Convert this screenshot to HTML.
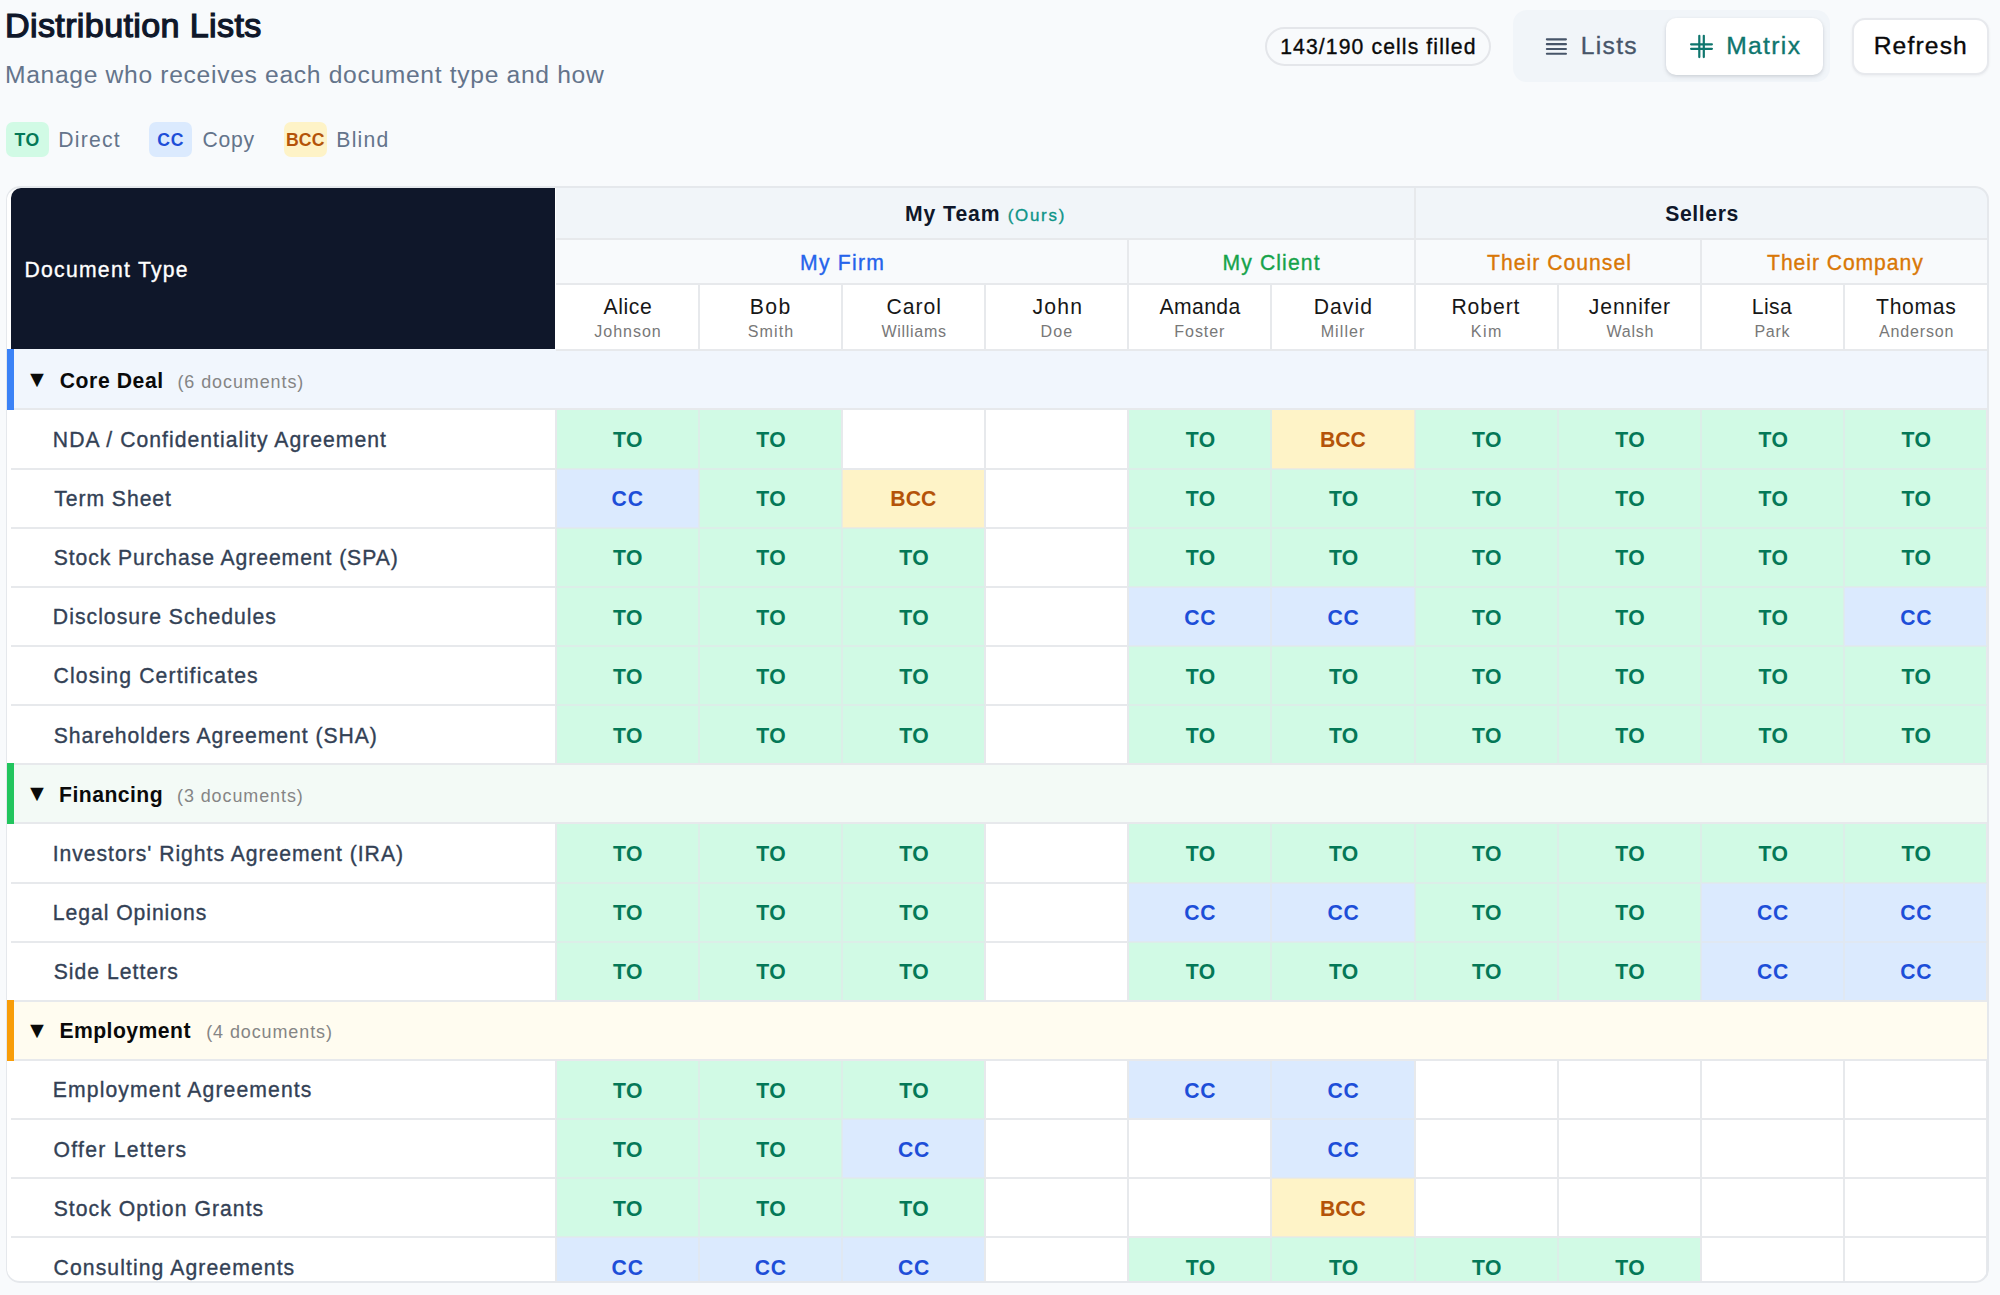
<!DOCTYPE html>
<html lang="en"><head><meta charset="utf-8"><title>Distribution Lists</title>
<style>
html,body{margin:0;padding:0;}
body{width:2000px;height:1295px;overflow:hidden;background:#f8fafc;position:relative;font-family:"Liberation Sans", sans-serif;}
.b{position:absolute;}
.t{position:absolute;white-space:nowrap;}
</style></head><body>
<div class="b" style="left:6px;top:122px;width:42.5px;height:35px;background:#d1fae5;border-radius:7px;"></div>
<div class="b" style="left:149px;top:122px;width:42.5px;height:35px;background:#dbeafe;border-radius:7px;"></div>
<div class="b" style="left:284px;top:122px;width:42.5px;height:35px;background:#fef3c7;border-radius:7px;"></div>
<div class="b" style="left:1265px;top:27px;width:226px;height:39px;border-radius:20px;border:2px solid #e4e6ea;box-sizing:border-box;background:#f8fafc;"></div>
<div class="b" style="left:1513px;top:10px;width:317px;height:72px;border-radius:14px;background:#f1f5f9;"></div>
<div class="b" style="left:1666px;top:18px;width:157px;height:57px;border-radius:10px;background:#fff;box-shadow:0 2px 5px rgba(15,23,42,0.10),0 1px 3px rgba(15,23,42,0.08);"></div>
<svg style="position:absolute;left:1545px;top:36px" width="23" height="22" viewBox="0 0 23 22"><g stroke="#475569" stroke-width="2.2" stroke-linecap="round"><line x1="1.9" y1="3.3" x2="20.9" y2="3.3"/><line x1="1.9" y1="8.2" x2="20.9" y2="8.2"/><line x1="1.9" y1="13" x2="20.9" y2="13"/><line x1="1.9" y1="17.75" x2="20.9" y2="17.75"/></g></svg>
<svg style="position:absolute;left:1688px;top:34px" width="26" height="26" viewBox="0 0 26 26"><g stroke="#0f766e" stroke-width="2.2" stroke-linecap="round"><line x1="11.3" y1="1.8" x2="11.3" y2="23.1"/><line x1="15.8" y1="1.8" x2="15.8" y2="23.1"/><line x1="3.1" y1="10.3" x2="23.9" y2="10.3"/><line x1="3.1" y1="14.8" x2="23.9" y2="14.8"/></g></svg>
<div class="b" style="left:1852px;top:18px;width:136.5px;height:56.5px;border-radius:13px;background:#fff;border:2px solid #e7e9ed;box-sizing:border-box;box-shadow:0 1px 3px rgba(15,23,42,0.06);"></div>
<div class="t" id="h1" style="left:4.96px;top:-8.83px;line-height:68px;font-size:34.14px;color:#0f172a;letter-spacing:0.356px;-webkit-text-stroke:1.25px #0f172a;">Distribution Lists</div>
<div class="t" id="sub" style="left:5.00px;top:50.45px;line-height:50px;font-size:24.66px;color:#64748b;letter-spacing:0.666px;">Manage who receives each document type and how</div>
<div class="t" id="lb0" style="left:14.50px;top:121.88px;line-height:36px;font-size:17.66px;color:#047857;font-weight:700;letter-spacing:0.432px;">TO</div>
<div class="t" id="ll0" style="left:58.30px;top:119.26px;line-height:42px;font-size:21.16px;color:#64748b;letter-spacing:1.224px;">Direct</div>
<div class="t" id="lb1" style="left:157.30px;top:121.88px;line-height:36px;font-size:17.66px;color:#1d4ed8;font-weight:700;letter-spacing:0.647px;">CC</div>
<div class="t" id="ll1" style="left:202.60px;top:119.26px;line-height:42px;font-size:21.16px;color:#64748b;letter-spacing:0.660px;">Copy</div>
<div class="t" id="lb2" style="left:285.90px;top:121.88px;line-height:36px;font-size:17.66px;color:#b45309;font-weight:700;letter-spacing:0.147px;">BCC</div>
<div class="t" id="ll2" style="left:336.30px;top:119.26px;line-height:42px;font-size:21.16px;color:#64748b;letter-spacing:1.229px;">Blind</div>
<div class="t" id="pill" style="left:1280.17px;top:25.66px;line-height:42px;font-size:21.16px;color:#0a0a0a;letter-spacing:1.117px;-webkit-text-stroke:0.35px #0a0a0a;">143/190 cells filled</div>
<div class="t" id="lists" style="left:1580.67px;top:21.45px;line-height:50px;font-size:24.66px;color:#475569;letter-spacing:1.318px;-webkit-text-stroke:0.35px #475569;">Lists</div>
<div class="t" id="matrix" style="left:1726.17px;top:21.45px;line-height:50px;font-size:24.66px;color:#0f766e;letter-spacing:1.350px;-webkit-text-stroke:0.35px #0f766e;">Matrix</div>
<div class="t" id="refresh" style="left:1873.67px;top:21.45px;line-height:50px;font-size:24.66px;color:#0a0a0a;letter-spacing:1.136px;-webkit-text-stroke:0.35px #0a0a0a;">Refresh</div>
<div class="b" style="left:6px;top:186px;width:1983px;height:1097px;border-radius:14px;overflow:hidden;background:#fff;"><div class="b" style="left:-6px;top:-186px;width:2000px;height:1295px;">
<div class="b" style="left:11px;top:188px;width:544px;height:161px;background:#0f172a;border-top-left-radius:10px;"></div>
<div class="b" style="left:556px;top:188px;width:1434px;height:51px;background:#f1f5f9;"></div>
<div class="b" style="left:556px;top:239px;width:1434px;height:45px;background:#f8fafc;"></div>
<div class="b" style="left:556px;top:284px;width:1434px;height:66px;background:#ffffff;"></div>
<div class="b" style="left:11px;top:349px;width:1979px;height:60px;background:#f1f6fd;"></div>
<div class="b" style="left:556px;top:409px;width:143px;height:60px;background:#d1fae5;"></div>
<div class="b" style="left:699px;top:409px;width:143px;height:60px;background:#d1fae5;"></div>
<div class="b" style="left:1128px;top:409px;width:144px;height:60px;background:#d1fae5;"></div>
<div class="b" style="left:1272px;top:409px;width:143px;height:60px;background:#fef3c7;"></div>
<div class="b" style="left:1415px;top:409px;width:143px;height:60px;background:#d1fae5;"></div>
<div class="b" style="left:1558px;top:409px;width:143px;height:60px;background:#d1fae5;"></div>
<div class="b" style="left:1701px;top:409px;width:143px;height:60px;background:#d1fae5;"></div>
<div class="b" style="left:1844px;top:409px;width:143px;height:60px;background:#d1fae5;"></div>
<div class="b" style="left:556px;top:469px;width:143px;height:59px;background:#dbeafe;"></div>
<div class="b" style="left:699px;top:469px;width:143px;height:59px;background:#d1fae5;"></div>
<div class="b" style="left:842px;top:469px;width:143px;height:59px;background:#fef3c7;"></div>
<div class="b" style="left:1128px;top:469px;width:144px;height:59px;background:#d1fae5;"></div>
<div class="b" style="left:1272px;top:469px;width:143px;height:59px;background:#d1fae5;"></div>
<div class="b" style="left:1415px;top:469px;width:143px;height:59px;background:#d1fae5;"></div>
<div class="b" style="left:1558px;top:469px;width:143px;height:59px;background:#d1fae5;"></div>
<div class="b" style="left:1701px;top:469px;width:143px;height:59px;background:#d1fae5;"></div>
<div class="b" style="left:1844px;top:469px;width:143px;height:59px;background:#d1fae5;"></div>
<div class="b" style="left:556px;top:528px;width:143px;height:59px;background:#d1fae5;"></div>
<div class="b" style="left:699px;top:528px;width:143px;height:59px;background:#d1fae5;"></div>
<div class="b" style="left:842px;top:528px;width:143px;height:59px;background:#d1fae5;"></div>
<div class="b" style="left:1128px;top:528px;width:144px;height:59px;background:#d1fae5;"></div>
<div class="b" style="left:1272px;top:528px;width:143px;height:59px;background:#d1fae5;"></div>
<div class="b" style="left:1415px;top:528px;width:143px;height:59px;background:#d1fae5;"></div>
<div class="b" style="left:1558px;top:528px;width:143px;height:59px;background:#d1fae5;"></div>
<div class="b" style="left:1701px;top:528px;width:143px;height:59px;background:#d1fae5;"></div>
<div class="b" style="left:1844px;top:528px;width:143px;height:59px;background:#d1fae5;"></div>
<div class="b" style="left:556px;top:587px;width:143px;height:59px;background:#d1fae5;"></div>
<div class="b" style="left:699px;top:587px;width:143px;height:59px;background:#d1fae5;"></div>
<div class="b" style="left:842px;top:587px;width:143px;height:59px;background:#d1fae5;"></div>
<div class="b" style="left:1128px;top:587px;width:144px;height:59px;background:#dbeafe;"></div>
<div class="b" style="left:1272px;top:587px;width:143px;height:59px;background:#dbeafe;"></div>
<div class="b" style="left:1415px;top:587px;width:143px;height:59px;background:#d1fae5;"></div>
<div class="b" style="left:1558px;top:587px;width:143px;height:59px;background:#d1fae5;"></div>
<div class="b" style="left:1701px;top:587px;width:143px;height:59px;background:#d1fae5;"></div>
<div class="b" style="left:1844px;top:587px;width:143px;height:59px;background:#dbeafe;"></div>
<div class="b" style="left:556px;top:646px;width:143px;height:59px;background:#d1fae5;"></div>
<div class="b" style="left:699px;top:646px;width:143px;height:59px;background:#d1fae5;"></div>
<div class="b" style="left:842px;top:646px;width:143px;height:59px;background:#d1fae5;"></div>
<div class="b" style="left:1128px;top:646px;width:144px;height:59px;background:#d1fae5;"></div>
<div class="b" style="left:1272px;top:646px;width:143px;height:59px;background:#d1fae5;"></div>
<div class="b" style="left:1415px;top:646px;width:143px;height:59px;background:#d1fae5;"></div>
<div class="b" style="left:1558px;top:646px;width:143px;height:59px;background:#d1fae5;"></div>
<div class="b" style="left:1701px;top:646px;width:143px;height:59px;background:#d1fae5;"></div>
<div class="b" style="left:1844px;top:646px;width:143px;height:59px;background:#d1fae5;"></div>
<div class="b" style="left:556px;top:705px;width:143px;height:59px;background:#d1fae5;"></div>
<div class="b" style="left:699px;top:705px;width:143px;height:59px;background:#d1fae5;"></div>
<div class="b" style="left:842px;top:705px;width:143px;height:59px;background:#d1fae5;"></div>
<div class="b" style="left:1128px;top:705px;width:144px;height:59px;background:#d1fae5;"></div>
<div class="b" style="left:1272px;top:705px;width:143px;height:59px;background:#d1fae5;"></div>
<div class="b" style="left:1415px;top:705px;width:143px;height:59px;background:#d1fae5;"></div>
<div class="b" style="left:1558px;top:705px;width:143px;height:59px;background:#d1fae5;"></div>
<div class="b" style="left:1701px;top:705px;width:143px;height:59px;background:#d1fae5;"></div>
<div class="b" style="left:1844px;top:705px;width:143px;height:59px;background:#d1fae5;"></div>
<div class="b" style="left:11px;top:763px;width:1979px;height:60px;background:#f3faf6;"></div>
<div class="b" style="left:556px;top:823px;width:143px;height:60px;background:#d1fae5;"></div>
<div class="b" style="left:699px;top:823px;width:143px;height:60px;background:#d1fae5;"></div>
<div class="b" style="left:842px;top:823px;width:143px;height:60px;background:#d1fae5;"></div>
<div class="b" style="left:1128px;top:823px;width:144px;height:60px;background:#d1fae5;"></div>
<div class="b" style="left:1272px;top:823px;width:143px;height:60px;background:#d1fae5;"></div>
<div class="b" style="left:1415px;top:823px;width:143px;height:60px;background:#d1fae5;"></div>
<div class="b" style="left:1558px;top:823px;width:143px;height:60px;background:#d1fae5;"></div>
<div class="b" style="left:1701px;top:823px;width:143px;height:60px;background:#d1fae5;"></div>
<div class="b" style="left:1844px;top:823px;width:143px;height:60px;background:#d1fae5;"></div>
<div class="b" style="left:556px;top:883px;width:143px;height:59px;background:#d1fae5;"></div>
<div class="b" style="left:699px;top:883px;width:143px;height:59px;background:#d1fae5;"></div>
<div class="b" style="left:842px;top:883px;width:143px;height:59px;background:#d1fae5;"></div>
<div class="b" style="left:1128px;top:883px;width:144px;height:59px;background:#dbeafe;"></div>
<div class="b" style="left:1272px;top:883px;width:143px;height:59px;background:#dbeafe;"></div>
<div class="b" style="left:1415px;top:883px;width:143px;height:59px;background:#d1fae5;"></div>
<div class="b" style="left:1558px;top:883px;width:143px;height:59px;background:#d1fae5;"></div>
<div class="b" style="left:1701px;top:883px;width:143px;height:59px;background:#dbeafe;"></div>
<div class="b" style="left:1844px;top:883px;width:143px;height:59px;background:#dbeafe;"></div>
<div class="b" style="left:556px;top:942px;width:143px;height:59px;background:#d1fae5;"></div>
<div class="b" style="left:699px;top:942px;width:143px;height:59px;background:#d1fae5;"></div>
<div class="b" style="left:842px;top:942px;width:143px;height:59px;background:#d1fae5;"></div>
<div class="b" style="left:1128px;top:942px;width:144px;height:59px;background:#d1fae5;"></div>
<div class="b" style="left:1272px;top:942px;width:143px;height:59px;background:#d1fae5;"></div>
<div class="b" style="left:1415px;top:942px;width:143px;height:59px;background:#d1fae5;"></div>
<div class="b" style="left:1558px;top:942px;width:143px;height:59px;background:#d1fae5;"></div>
<div class="b" style="left:1701px;top:942px;width:143px;height:59px;background:#dbeafe;"></div>
<div class="b" style="left:1844px;top:942px;width:143px;height:59px;background:#dbeafe;"></div>
<div class="b" style="left:11px;top:1000px;width:1979px;height:60px;background:#fffcf0;"></div>
<div class="b" style="left:556px;top:1060px;width:143px;height:59px;background:#d1fae5;"></div>
<div class="b" style="left:699px;top:1060px;width:143px;height:59px;background:#d1fae5;"></div>
<div class="b" style="left:842px;top:1060px;width:143px;height:59px;background:#d1fae5;"></div>
<div class="b" style="left:1128px;top:1060px;width:144px;height:59px;background:#dbeafe;"></div>
<div class="b" style="left:1272px;top:1060px;width:143px;height:59px;background:#dbeafe;"></div>
<div class="b" style="left:556px;top:1119px;width:143px;height:59px;background:#d1fae5;"></div>
<div class="b" style="left:699px;top:1119px;width:143px;height:59px;background:#d1fae5;"></div>
<div class="b" style="left:842px;top:1119px;width:143px;height:59px;background:#dbeafe;"></div>
<div class="b" style="left:1272px;top:1119px;width:143px;height:59px;background:#dbeafe;"></div>
<div class="b" style="left:556px;top:1178px;width:143px;height:59px;background:#d1fae5;"></div>
<div class="b" style="left:699px;top:1178px;width:143px;height:59px;background:#d1fae5;"></div>
<div class="b" style="left:842px;top:1178px;width:143px;height:59px;background:#d1fae5;"></div>
<div class="b" style="left:1272px;top:1178px;width:143px;height:59px;background:#fef3c7;"></div>
<div class="b" style="left:556px;top:1237px;width:143px;height:60px;background:#dbeafe;"></div>
<div class="b" style="left:699px;top:1237px;width:143px;height:60px;background:#dbeafe;"></div>
<div class="b" style="left:842px;top:1237px;width:143px;height:60px;background:#dbeafe;"></div>
<div class="b" style="left:1128px;top:1237px;width:144px;height:60px;background:#d1fae5;"></div>
<div class="b" style="left:1272px;top:1237px;width:143px;height:60px;background:#d1fae5;"></div>
<div class="b" style="left:1415px;top:1237px;width:143px;height:60px;background:#d1fae5;"></div>
<div class="b" style="left:1558px;top:1237px;width:143px;height:60px;background:#d1fae5;"></div>
<div class="b" style="left:556px;top:238px;width:1434px;height:2px;background:#e7e9ec;"></div>
<div class="b" style="left:556px;top:283px;width:1434px;height:2px;background:#e7e9ec;"></div>
<div class="b" style="left:556px;top:349px;width:1434px;height:2px;background:#e7e9ec;"></div>
<div class="b" style="left:11px;top:408px;width:545px;height:2px;background:#e7e9ec;"></div>
<div class="b" style="left:556px;top:408px;width:143px;height:2px;background:#e7e9ec;"></div>
<div class="b" style="left:699px;top:408px;width:143px;height:2px;background:#e7e9ec;"></div>
<div class="b" style="left:842px;top:408px;width:143px;height:2px;background:#e7e9ec;"></div>
<div class="b" style="left:985px;top:408px;width:143px;height:2px;background:#e7e9ec;"></div>
<div class="b" style="left:1128px;top:408px;width:144px;height:2px;background:#e7e9ec;"></div>
<div class="b" style="left:1272px;top:408px;width:143px;height:2px;background:#e7e9ec;"></div>
<div class="b" style="left:1415px;top:408px;width:143px;height:2px;background:#e7e9ec;"></div>
<div class="b" style="left:1558px;top:408px;width:143px;height:2px;background:#e7e9ec;"></div>
<div class="b" style="left:1701px;top:408px;width:143px;height:2px;background:#e7e9ec;"></div>
<div class="b" style="left:1844px;top:408px;width:146px;height:2px;background:#e7e9ec;"></div>
<div class="b" style="left:11px;top:468px;width:545px;height:2px;background:#e7e9ec;"></div>
<div class="b" style="left:556px;top:468px;width:143px;height:2px;background:rgba(226,230,233,0.6);"></div>
<div class="b" style="left:699px;top:468px;width:143px;height:2px;background:rgba(226,230,233,0.6);"></div>
<div class="b" style="left:842px;top:468px;width:143px;height:2px;background:#e7e9ec;"></div>
<div class="b" style="left:985px;top:468px;width:143px;height:2px;background:#e7e9ec;"></div>
<div class="b" style="left:1128px;top:468px;width:144px;height:2px;background:rgba(226,230,233,0.6);"></div>
<div class="b" style="left:1272px;top:468px;width:143px;height:2px;background:rgba(226,230,233,0.6);"></div>
<div class="b" style="left:1415px;top:468px;width:143px;height:2px;background:rgba(226,230,233,0.6);"></div>
<div class="b" style="left:1558px;top:468px;width:143px;height:2px;background:rgba(226,230,233,0.6);"></div>
<div class="b" style="left:1701px;top:468px;width:143px;height:2px;background:rgba(226,230,233,0.6);"></div>
<div class="b" style="left:1844px;top:468px;width:146px;height:2px;background:rgba(226,230,233,0.6);"></div>
<div class="b" style="left:11px;top:527px;width:545px;height:2px;background:#e7e9ec;"></div>
<div class="b" style="left:556px;top:527px;width:143px;height:2px;background:rgba(226,230,233,0.6);"></div>
<div class="b" style="left:699px;top:527px;width:143px;height:2px;background:rgba(226,230,233,0.6);"></div>
<div class="b" style="left:842px;top:527px;width:143px;height:2px;background:rgba(226,230,233,0.6);"></div>
<div class="b" style="left:985px;top:527px;width:143px;height:2px;background:#e7e9ec;"></div>
<div class="b" style="left:1128px;top:527px;width:144px;height:2px;background:rgba(226,230,233,0.6);"></div>
<div class="b" style="left:1272px;top:527px;width:143px;height:2px;background:rgba(226,230,233,0.6);"></div>
<div class="b" style="left:1415px;top:527px;width:143px;height:2px;background:rgba(226,230,233,0.6);"></div>
<div class="b" style="left:1558px;top:527px;width:143px;height:2px;background:rgba(226,230,233,0.6);"></div>
<div class="b" style="left:1701px;top:527px;width:143px;height:2px;background:rgba(226,230,233,0.6);"></div>
<div class="b" style="left:1844px;top:527px;width:146px;height:2px;background:rgba(226,230,233,0.6);"></div>
<div class="b" style="left:11px;top:586px;width:545px;height:2px;background:#e7e9ec;"></div>
<div class="b" style="left:556px;top:586px;width:143px;height:2px;background:rgba(226,230,233,0.6);"></div>
<div class="b" style="left:699px;top:586px;width:143px;height:2px;background:rgba(226,230,233,0.6);"></div>
<div class="b" style="left:842px;top:586px;width:143px;height:2px;background:rgba(226,230,233,0.6);"></div>
<div class="b" style="left:985px;top:586px;width:143px;height:2px;background:#e7e9ec;"></div>
<div class="b" style="left:1128px;top:586px;width:144px;height:2px;background:rgba(226,230,233,0.6);"></div>
<div class="b" style="left:1272px;top:586px;width:143px;height:2px;background:rgba(226,230,233,0.6);"></div>
<div class="b" style="left:1415px;top:586px;width:143px;height:2px;background:rgba(226,230,233,0.6);"></div>
<div class="b" style="left:1558px;top:586px;width:143px;height:2px;background:rgba(226,230,233,0.6);"></div>
<div class="b" style="left:1701px;top:586px;width:143px;height:2px;background:rgba(226,230,233,0.6);"></div>
<div class="b" style="left:1844px;top:586px;width:146px;height:2px;background:rgba(226,230,233,0.6);"></div>
<div class="b" style="left:11px;top:645px;width:545px;height:2px;background:#e7e9ec;"></div>
<div class="b" style="left:556px;top:645px;width:143px;height:2px;background:rgba(226,230,233,0.6);"></div>
<div class="b" style="left:699px;top:645px;width:143px;height:2px;background:rgba(226,230,233,0.6);"></div>
<div class="b" style="left:842px;top:645px;width:143px;height:2px;background:rgba(226,230,233,0.6);"></div>
<div class="b" style="left:985px;top:645px;width:143px;height:2px;background:#e7e9ec;"></div>
<div class="b" style="left:1128px;top:645px;width:144px;height:2px;background:rgba(226,230,233,0.6);"></div>
<div class="b" style="left:1272px;top:645px;width:143px;height:2px;background:rgba(226,230,233,0.6);"></div>
<div class="b" style="left:1415px;top:645px;width:143px;height:2px;background:rgba(226,230,233,0.6);"></div>
<div class="b" style="left:1558px;top:645px;width:143px;height:2px;background:rgba(226,230,233,0.6);"></div>
<div class="b" style="left:1701px;top:645px;width:143px;height:2px;background:rgba(226,230,233,0.6);"></div>
<div class="b" style="left:1844px;top:645px;width:146px;height:2px;background:rgba(226,230,233,0.6);"></div>
<div class="b" style="left:11px;top:704px;width:545px;height:2px;background:#e7e9ec;"></div>
<div class="b" style="left:556px;top:704px;width:143px;height:2px;background:rgba(226,230,233,0.6);"></div>
<div class="b" style="left:699px;top:704px;width:143px;height:2px;background:rgba(226,230,233,0.6);"></div>
<div class="b" style="left:842px;top:704px;width:143px;height:2px;background:rgba(226,230,233,0.6);"></div>
<div class="b" style="left:985px;top:704px;width:143px;height:2px;background:#e7e9ec;"></div>
<div class="b" style="left:1128px;top:704px;width:144px;height:2px;background:rgba(226,230,233,0.6);"></div>
<div class="b" style="left:1272px;top:704px;width:143px;height:2px;background:rgba(226,230,233,0.6);"></div>
<div class="b" style="left:1415px;top:704px;width:143px;height:2px;background:rgba(226,230,233,0.6);"></div>
<div class="b" style="left:1558px;top:704px;width:143px;height:2px;background:rgba(226,230,233,0.6);"></div>
<div class="b" style="left:1701px;top:704px;width:143px;height:2px;background:rgba(226,230,233,0.6);"></div>
<div class="b" style="left:1844px;top:704px;width:146px;height:2px;background:rgba(226,230,233,0.6);"></div>
<div class="b" style="left:11px;top:763px;width:545px;height:2px;background:#e7e9ec;"></div>
<div class="b" style="left:556px;top:763px;width:143px;height:2px;background:#e7e9ec;"></div>
<div class="b" style="left:699px;top:763px;width:143px;height:2px;background:#e7e9ec;"></div>
<div class="b" style="left:842px;top:763px;width:143px;height:2px;background:#e7e9ec;"></div>
<div class="b" style="left:985px;top:763px;width:143px;height:2px;background:#e7e9ec;"></div>
<div class="b" style="left:1128px;top:763px;width:144px;height:2px;background:#e7e9ec;"></div>
<div class="b" style="left:1272px;top:763px;width:143px;height:2px;background:#e7e9ec;"></div>
<div class="b" style="left:1415px;top:763px;width:143px;height:2px;background:#e7e9ec;"></div>
<div class="b" style="left:1558px;top:763px;width:143px;height:2px;background:#e7e9ec;"></div>
<div class="b" style="left:1701px;top:763px;width:143px;height:2px;background:#e7e9ec;"></div>
<div class="b" style="left:1844px;top:763px;width:146px;height:2px;background:#e7e9ec;"></div>
<div class="b" style="left:11px;top:822px;width:545px;height:2px;background:#e7e9ec;"></div>
<div class="b" style="left:556px;top:822px;width:143px;height:2px;background:#e7e9ec;"></div>
<div class="b" style="left:699px;top:822px;width:143px;height:2px;background:#e7e9ec;"></div>
<div class="b" style="left:842px;top:822px;width:143px;height:2px;background:#e7e9ec;"></div>
<div class="b" style="left:985px;top:822px;width:143px;height:2px;background:#e7e9ec;"></div>
<div class="b" style="left:1128px;top:822px;width:144px;height:2px;background:#e7e9ec;"></div>
<div class="b" style="left:1272px;top:822px;width:143px;height:2px;background:#e7e9ec;"></div>
<div class="b" style="left:1415px;top:822px;width:143px;height:2px;background:#e7e9ec;"></div>
<div class="b" style="left:1558px;top:822px;width:143px;height:2px;background:#e7e9ec;"></div>
<div class="b" style="left:1701px;top:822px;width:143px;height:2px;background:#e7e9ec;"></div>
<div class="b" style="left:1844px;top:822px;width:146px;height:2px;background:#e7e9ec;"></div>
<div class="b" style="left:11px;top:882px;width:545px;height:2px;background:#e7e9ec;"></div>
<div class="b" style="left:556px;top:882px;width:143px;height:2px;background:rgba(226,230,233,0.6);"></div>
<div class="b" style="left:699px;top:882px;width:143px;height:2px;background:rgba(226,230,233,0.6);"></div>
<div class="b" style="left:842px;top:882px;width:143px;height:2px;background:rgba(226,230,233,0.6);"></div>
<div class="b" style="left:985px;top:882px;width:143px;height:2px;background:#e7e9ec;"></div>
<div class="b" style="left:1128px;top:882px;width:144px;height:2px;background:rgba(226,230,233,0.6);"></div>
<div class="b" style="left:1272px;top:882px;width:143px;height:2px;background:rgba(226,230,233,0.6);"></div>
<div class="b" style="left:1415px;top:882px;width:143px;height:2px;background:rgba(226,230,233,0.6);"></div>
<div class="b" style="left:1558px;top:882px;width:143px;height:2px;background:rgba(226,230,233,0.6);"></div>
<div class="b" style="left:1701px;top:882px;width:143px;height:2px;background:rgba(226,230,233,0.6);"></div>
<div class="b" style="left:1844px;top:882px;width:146px;height:2px;background:rgba(226,230,233,0.6);"></div>
<div class="b" style="left:11px;top:941px;width:545px;height:2px;background:#e7e9ec;"></div>
<div class="b" style="left:556px;top:941px;width:143px;height:2px;background:rgba(226,230,233,0.6);"></div>
<div class="b" style="left:699px;top:941px;width:143px;height:2px;background:rgba(226,230,233,0.6);"></div>
<div class="b" style="left:842px;top:941px;width:143px;height:2px;background:rgba(226,230,233,0.6);"></div>
<div class="b" style="left:985px;top:941px;width:143px;height:2px;background:#e7e9ec;"></div>
<div class="b" style="left:1128px;top:941px;width:144px;height:2px;background:rgba(226,230,233,0.6);"></div>
<div class="b" style="left:1272px;top:941px;width:143px;height:2px;background:rgba(226,230,233,0.6);"></div>
<div class="b" style="left:1415px;top:941px;width:143px;height:2px;background:rgba(226,230,233,0.6);"></div>
<div class="b" style="left:1558px;top:941px;width:143px;height:2px;background:rgba(226,230,233,0.6);"></div>
<div class="b" style="left:1701px;top:941px;width:143px;height:2px;background:rgba(226,230,233,0.6);"></div>
<div class="b" style="left:1844px;top:941px;width:146px;height:2px;background:rgba(226,230,233,0.6);"></div>
<div class="b" style="left:11px;top:1000px;width:545px;height:2px;background:#e7e9ec;"></div>
<div class="b" style="left:556px;top:1000px;width:143px;height:2px;background:#e7e9ec;"></div>
<div class="b" style="left:699px;top:1000px;width:143px;height:2px;background:#e7e9ec;"></div>
<div class="b" style="left:842px;top:1000px;width:143px;height:2px;background:#e7e9ec;"></div>
<div class="b" style="left:985px;top:1000px;width:143px;height:2px;background:#e7e9ec;"></div>
<div class="b" style="left:1128px;top:1000px;width:144px;height:2px;background:#e7e9ec;"></div>
<div class="b" style="left:1272px;top:1000px;width:143px;height:2px;background:#e7e9ec;"></div>
<div class="b" style="left:1415px;top:1000px;width:143px;height:2px;background:#e7e9ec;"></div>
<div class="b" style="left:1558px;top:1000px;width:143px;height:2px;background:#e7e9ec;"></div>
<div class="b" style="left:1701px;top:1000px;width:143px;height:2px;background:#e7e9ec;"></div>
<div class="b" style="left:1844px;top:1000px;width:146px;height:2px;background:#e7e9ec;"></div>
<div class="b" style="left:11px;top:1059px;width:545px;height:2px;background:#e7e9ec;"></div>
<div class="b" style="left:556px;top:1059px;width:143px;height:2px;background:#e7e9ec;"></div>
<div class="b" style="left:699px;top:1059px;width:143px;height:2px;background:#e7e9ec;"></div>
<div class="b" style="left:842px;top:1059px;width:143px;height:2px;background:#e7e9ec;"></div>
<div class="b" style="left:985px;top:1059px;width:143px;height:2px;background:#e7e9ec;"></div>
<div class="b" style="left:1128px;top:1059px;width:144px;height:2px;background:#e7e9ec;"></div>
<div class="b" style="left:1272px;top:1059px;width:143px;height:2px;background:#e7e9ec;"></div>
<div class="b" style="left:1415px;top:1059px;width:143px;height:2px;background:#e7e9ec;"></div>
<div class="b" style="left:1558px;top:1059px;width:143px;height:2px;background:#e7e9ec;"></div>
<div class="b" style="left:1701px;top:1059px;width:143px;height:2px;background:#e7e9ec;"></div>
<div class="b" style="left:1844px;top:1059px;width:146px;height:2px;background:#e7e9ec;"></div>
<div class="b" style="left:11px;top:1118px;width:545px;height:2px;background:#e7e9ec;"></div>
<div class="b" style="left:556px;top:1118px;width:143px;height:2px;background:rgba(226,230,233,0.6);"></div>
<div class="b" style="left:699px;top:1118px;width:143px;height:2px;background:rgba(226,230,233,0.6);"></div>
<div class="b" style="left:842px;top:1118px;width:143px;height:2px;background:rgba(226,230,233,0.6);"></div>
<div class="b" style="left:985px;top:1118px;width:143px;height:2px;background:#e7e9ec;"></div>
<div class="b" style="left:1128px;top:1118px;width:144px;height:2px;background:#e7e9ec;"></div>
<div class="b" style="left:1272px;top:1118px;width:143px;height:2px;background:rgba(226,230,233,0.6);"></div>
<div class="b" style="left:1415px;top:1118px;width:143px;height:2px;background:#e7e9ec;"></div>
<div class="b" style="left:1558px;top:1118px;width:143px;height:2px;background:#e7e9ec;"></div>
<div class="b" style="left:1701px;top:1118px;width:143px;height:2px;background:#e7e9ec;"></div>
<div class="b" style="left:1844px;top:1118px;width:146px;height:2px;background:#e7e9ec;"></div>
<div class="b" style="left:11px;top:1177px;width:545px;height:2px;background:#e7e9ec;"></div>
<div class="b" style="left:556px;top:1177px;width:143px;height:2px;background:rgba(226,230,233,0.6);"></div>
<div class="b" style="left:699px;top:1177px;width:143px;height:2px;background:rgba(226,230,233,0.6);"></div>
<div class="b" style="left:842px;top:1177px;width:143px;height:2px;background:rgba(226,230,233,0.6);"></div>
<div class="b" style="left:985px;top:1177px;width:143px;height:2px;background:#e7e9ec;"></div>
<div class="b" style="left:1128px;top:1177px;width:144px;height:2px;background:#e7e9ec;"></div>
<div class="b" style="left:1272px;top:1177px;width:143px;height:2px;background:rgba(226,230,233,0.6);"></div>
<div class="b" style="left:1415px;top:1177px;width:143px;height:2px;background:#e7e9ec;"></div>
<div class="b" style="left:1558px;top:1177px;width:143px;height:2px;background:#e7e9ec;"></div>
<div class="b" style="left:1701px;top:1177px;width:143px;height:2px;background:#e7e9ec;"></div>
<div class="b" style="left:1844px;top:1177px;width:146px;height:2px;background:#e7e9ec;"></div>
<div class="b" style="left:11px;top:1236px;width:545px;height:2px;background:#e7e9ec;"></div>
<div class="b" style="left:556px;top:1236px;width:143px;height:2px;background:rgba(226,230,233,0.6);"></div>
<div class="b" style="left:699px;top:1236px;width:143px;height:2px;background:rgba(226,230,233,0.6);"></div>
<div class="b" style="left:842px;top:1236px;width:143px;height:2px;background:rgba(226,230,233,0.6);"></div>
<div class="b" style="left:985px;top:1236px;width:143px;height:2px;background:#e7e9ec;"></div>
<div class="b" style="left:1128px;top:1236px;width:144px;height:2px;background:#e7e9ec;"></div>
<div class="b" style="left:1272px;top:1236px;width:143px;height:2px;background:rgba(226,230,233,0.6);"></div>
<div class="b" style="left:1415px;top:1236px;width:143px;height:2px;background:#e7e9ec;"></div>
<div class="b" style="left:1558px;top:1236px;width:143px;height:2px;background:#e7e9ec;"></div>
<div class="b" style="left:1701px;top:1236px;width:143px;height:2px;background:#e7e9ec;"></div>
<div class="b" style="left:1844px;top:1236px;width:146px;height:2px;background:#e7e9ec;"></div>
<div class="b" style="left:11px;top:1296px;width:545px;height:2px;background:#e7e9ec;"></div>
<div class="b" style="left:556px;top:1296px;width:143px;height:2px;background:#e7e9ec;"></div>
<div class="b" style="left:699px;top:1296px;width:143px;height:2px;background:#e7e9ec;"></div>
<div class="b" style="left:842px;top:1296px;width:143px;height:2px;background:#e7e9ec;"></div>
<div class="b" style="left:985px;top:1296px;width:143px;height:2px;background:#e7e9ec;"></div>
<div class="b" style="left:1128px;top:1296px;width:144px;height:2px;background:#e7e9ec;"></div>
<div class="b" style="left:1272px;top:1296px;width:143px;height:2px;background:#e7e9ec;"></div>
<div class="b" style="left:1415px;top:1296px;width:143px;height:2px;background:#e7e9ec;"></div>
<div class="b" style="left:1558px;top:1296px;width:143px;height:2px;background:#e7e9ec;"></div>
<div class="b" style="left:1701px;top:1296px;width:143px;height:2px;background:#e7e9ec;"></div>
<div class="b" style="left:1844px;top:1296px;width:146px;height:2px;background:#e7e9ec;"></div>
<div class="b" style="left:1414px;top:188px;width:2px;height:162px;background:#e7e9ec;"></div>
<div class="b" style="left:1127px;top:239px;width:2px;height:111px;background:#e7e9ec;"></div>
<div class="b" style="left:1700px;top:239px;width:2px;height:111px;background:#e7e9ec;"></div>
<div class="b" style="left:698px;top:284px;width:2px;height:66px;background:#e7e9ec;"></div>
<div class="b" style="left:841px;top:284px;width:2px;height:66px;background:#e7e9ec;"></div>
<div class="b" style="left:984px;top:284px;width:2px;height:66px;background:#e7e9ec;"></div>
<div class="b" style="left:1270px;top:284px;width:2px;height:66px;background:#e7e9ec;"></div>
<div class="b" style="left:1557px;top:284px;width:2px;height:66px;background:#e7e9ec;"></div>
<div class="b" style="left:1843px;top:284px;width:2px;height:66px;background:#e7e9ec;"></div>
<div class="b" style="left:555px;top:410px;width:2px;height:58px;background:#e7e9ec;"></div>
<div class="b" style="left:698px;top:410px;width:2px;height:58px;background:rgba(226,230,233,0.6);"></div>
<div class="b" style="left:841px;top:410px;width:2px;height:58px;background:#e7e9ec;"></div>
<div class="b" style="left:984px;top:410px;width:2px;height:58px;background:#e7e9ec;"></div>
<div class="b" style="left:1127px;top:410px;width:2px;height:58px;background:#e7e9ec;"></div>
<div class="b" style="left:1270px;top:410px;width:2px;height:58px;background:rgba(226,230,233,0.6);"></div>
<div class="b" style="left:1414px;top:410px;width:2px;height:58px;background:rgba(226,230,233,0.6);"></div>
<div class="b" style="left:1557px;top:410px;width:2px;height:58px;background:rgba(226,230,233,0.6);"></div>
<div class="b" style="left:1700px;top:410px;width:2px;height:58px;background:rgba(226,230,233,0.6);"></div>
<div class="b" style="left:1843px;top:410px;width:2px;height:58px;background:rgba(226,230,233,0.6);"></div>
<div class="b" style="left:1986px;top:410px;width:2px;height:58px;background:#e7e9ec;"></div>
<div class="b" style="left:555px;top:470px;width:2px;height:57px;background:#e7e9ec;"></div>
<div class="b" style="left:698px;top:470px;width:2px;height:57px;background:rgba(226,230,233,0.6);"></div>
<div class="b" style="left:841px;top:470px;width:2px;height:57px;background:rgba(226,230,233,0.6);"></div>
<div class="b" style="left:984px;top:470px;width:2px;height:57px;background:#e7e9ec;"></div>
<div class="b" style="left:1127px;top:470px;width:2px;height:57px;background:#e7e9ec;"></div>
<div class="b" style="left:1270px;top:470px;width:2px;height:57px;background:rgba(226,230,233,0.6);"></div>
<div class="b" style="left:1414px;top:470px;width:2px;height:57px;background:rgba(226,230,233,0.6);"></div>
<div class="b" style="left:1557px;top:470px;width:2px;height:57px;background:rgba(226,230,233,0.6);"></div>
<div class="b" style="left:1700px;top:470px;width:2px;height:57px;background:rgba(226,230,233,0.6);"></div>
<div class="b" style="left:1843px;top:470px;width:2px;height:57px;background:rgba(226,230,233,0.6);"></div>
<div class="b" style="left:1986px;top:470px;width:2px;height:57px;background:#e7e9ec;"></div>
<div class="b" style="left:555px;top:529px;width:2px;height:57px;background:#e7e9ec;"></div>
<div class="b" style="left:698px;top:529px;width:2px;height:57px;background:rgba(226,230,233,0.6);"></div>
<div class="b" style="left:841px;top:529px;width:2px;height:57px;background:rgba(226,230,233,0.6);"></div>
<div class="b" style="left:984px;top:529px;width:2px;height:57px;background:#e7e9ec;"></div>
<div class="b" style="left:1127px;top:529px;width:2px;height:57px;background:#e7e9ec;"></div>
<div class="b" style="left:1270px;top:529px;width:2px;height:57px;background:rgba(226,230,233,0.6);"></div>
<div class="b" style="left:1414px;top:529px;width:2px;height:57px;background:rgba(226,230,233,0.6);"></div>
<div class="b" style="left:1557px;top:529px;width:2px;height:57px;background:rgba(226,230,233,0.6);"></div>
<div class="b" style="left:1700px;top:529px;width:2px;height:57px;background:rgba(226,230,233,0.6);"></div>
<div class="b" style="left:1843px;top:529px;width:2px;height:57px;background:rgba(226,230,233,0.6);"></div>
<div class="b" style="left:1986px;top:529px;width:2px;height:57px;background:#e7e9ec;"></div>
<div class="b" style="left:555px;top:588px;width:2px;height:57px;background:#e7e9ec;"></div>
<div class="b" style="left:698px;top:588px;width:2px;height:57px;background:rgba(226,230,233,0.6);"></div>
<div class="b" style="left:841px;top:588px;width:2px;height:57px;background:rgba(226,230,233,0.6);"></div>
<div class="b" style="left:984px;top:588px;width:2px;height:57px;background:#e7e9ec;"></div>
<div class="b" style="left:1127px;top:588px;width:2px;height:57px;background:#e7e9ec;"></div>
<div class="b" style="left:1270px;top:588px;width:2px;height:57px;background:rgba(226,230,233,0.6);"></div>
<div class="b" style="left:1414px;top:588px;width:2px;height:57px;background:rgba(226,230,233,0.6);"></div>
<div class="b" style="left:1557px;top:588px;width:2px;height:57px;background:rgba(226,230,233,0.6);"></div>
<div class="b" style="left:1700px;top:588px;width:2px;height:57px;background:rgba(226,230,233,0.6);"></div>
<div class="b" style="left:1843px;top:588px;width:2px;height:57px;background:rgba(226,230,233,0.6);"></div>
<div class="b" style="left:1986px;top:588px;width:2px;height:57px;background:#e7e9ec;"></div>
<div class="b" style="left:555px;top:647px;width:2px;height:57px;background:#e7e9ec;"></div>
<div class="b" style="left:698px;top:647px;width:2px;height:57px;background:rgba(226,230,233,0.6);"></div>
<div class="b" style="left:841px;top:647px;width:2px;height:57px;background:rgba(226,230,233,0.6);"></div>
<div class="b" style="left:984px;top:647px;width:2px;height:57px;background:#e7e9ec;"></div>
<div class="b" style="left:1127px;top:647px;width:2px;height:57px;background:#e7e9ec;"></div>
<div class="b" style="left:1270px;top:647px;width:2px;height:57px;background:rgba(226,230,233,0.6);"></div>
<div class="b" style="left:1414px;top:647px;width:2px;height:57px;background:rgba(226,230,233,0.6);"></div>
<div class="b" style="left:1557px;top:647px;width:2px;height:57px;background:rgba(226,230,233,0.6);"></div>
<div class="b" style="left:1700px;top:647px;width:2px;height:57px;background:rgba(226,230,233,0.6);"></div>
<div class="b" style="left:1843px;top:647px;width:2px;height:57px;background:rgba(226,230,233,0.6);"></div>
<div class="b" style="left:1986px;top:647px;width:2px;height:57px;background:#e7e9ec;"></div>
<div class="b" style="left:555px;top:706px;width:2px;height:57px;background:#e7e9ec;"></div>
<div class="b" style="left:698px;top:706px;width:2px;height:57px;background:rgba(226,230,233,0.6);"></div>
<div class="b" style="left:841px;top:706px;width:2px;height:57px;background:rgba(226,230,233,0.6);"></div>
<div class="b" style="left:984px;top:706px;width:2px;height:57px;background:#e7e9ec;"></div>
<div class="b" style="left:1127px;top:706px;width:2px;height:57px;background:#e7e9ec;"></div>
<div class="b" style="left:1270px;top:706px;width:2px;height:57px;background:rgba(226,230,233,0.6);"></div>
<div class="b" style="left:1414px;top:706px;width:2px;height:57px;background:rgba(226,230,233,0.6);"></div>
<div class="b" style="left:1557px;top:706px;width:2px;height:57px;background:rgba(226,230,233,0.6);"></div>
<div class="b" style="left:1700px;top:706px;width:2px;height:57px;background:rgba(226,230,233,0.6);"></div>
<div class="b" style="left:1843px;top:706px;width:2px;height:57px;background:rgba(226,230,233,0.6);"></div>
<div class="b" style="left:1986px;top:706px;width:2px;height:57px;background:#e7e9ec;"></div>
<div class="b" style="left:555px;top:824px;width:2px;height:58px;background:#e7e9ec;"></div>
<div class="b" style="left:698px;top:824px;width:2px;height:58px;background:rgba(226,230,233,0.6);"></div>
<div class="b" style="left:841px;top:824px;width:2px;height:58px;background:rgba(226,230,233,0.6);"></div>
<div class="b" style="left:984px;top:824px;width:2px;height:58px;background:#e7e9ec;"></div>
<div class="b" style="left:1127px;top:824px;width:2px;height:58px;background:#e7e9ec;"></div>
<div class="b" style="left:1270px;top:824px;width:2px;height:58px;background:rgba(226,230,233,0.6);"></div>
<div class="b" style="left:1414px;top:824px;width:2px;height:58px;background:rgba(226,230,233,0.6);"></div>
<div class="b" style="left:1557px;top:824px;width:2px;height:58px;background:rgba(226,230,233,0.6);"></div>
<div class="b" style="left:1700px;top:824px;width:2px;height:58px;background:rgba(226,230,233,0.6);"></div>
<div class="b" style="left:1843px;top:824px;width:2px;height:58px;background:rgba(226,230,233,0.6);"></div>
<div class="b" style="left:1986px;top:824px;width:2px;height:58px;background:#e7e9ec;"></div>
<div class="b" style="left:555px;top:884px;width:2px;height:57px;background:#e7e9ec;"></div>
<div class="b" style="left:698px;top:884px;width:2px;height:57px;background:rgba(226,230,233,0.6);"></div>
<div class="b" style="left:841px;top:884px;width:2px;height:57px;background:rgba(226,230,233,0.6);"></div>
<div class="b" style="left:984px;top:884px;width:2px;height:57px;background:#e7e9ec;"></div>
<div class="b" style="left:1127px;top:884px;width:2px;height:57px;background:#e7e9ec;"></div>
<div class="b" style="left:1270px;top:884px;width:2px;height:57px;background:rgba(226,230,233,0.6);"></div>
<div class="b" style="left:1414px;top:884px;width:2px;height:57px;background:rgba(226,230,233,0.6);"></div>
<div class="b" style="left:1557px;top:884px;width:2px;height:57px;background:rgba(226,230,233,0.6);"></div>
<div class="b" style="left:1700px;top:884px;width:2px;height:57px;background:rgba(226,230,233,0.6);"></div>
<div class="b" style="left:1843px;top:884px;width:2px;height:57px;background:rgba(226,230,233,0.6);"></div>
<div class="b" style="left:1986px;top:884px;width:2px;height:57px;background:#e7e9ec;"></div>
<div class="b" style="left:555px;top:943px;width:2px;height:57px;background:#e7e9ec;"></div>
<div class="b" style="left:698px;top:943px;width:2px;height:57px;background:rgba(226,230,233,0.6);"></div>
<div class="b" style="left:841px;top:943px;width:2px;height:57px;background:rgba(226,230,233,0.6);"></div>
<div class="b" style="left:984px;top:943px;width:2px;height:57px;background:#e7e9ec;"></div>
<div class="b" style="left:1127px;top:943px;width:2px;height:57px;background:#e7e9ec;"></div>
<div class="b" style="left:1270px;top:943px;width:2px;height:57px;background:rgba(226,230,233,0.6);"></div>
<div class="b" style="left:1414px;top:943px;width:2px;height:57px;background:rgba(226,230,233,0.6);"></div>
<div class="b" style="left:1557px;top:943px;width:2px;height:57px;background:rgba(226,230,233,0.6);"></div>
<div class="b" style="left:1700px;top:943px;width:2px;height:57px;background:rgba(226,230,233,0.6);"></div>
<div class="b" style="left:1843px;top:943px;width:2px;height:57px;background:rgba(226,230,233,0.6);"></div>
<div class="b" style="left:1986px;top:943px;width:2px;height:57px;background:#e7e9ec;"></div>
<div class="b" style="left:555px;top:1061px;width:2px;height:57px;background:#e7e9ec;"></div>
<div class="b" style="left:698px;top:1061px;width:2px;height:57px;background:rgba(226,230,233,0.6);"></div>
<div class="b" style="left:841px;top:1061px;width:2px;height:57px;background:rgba(226,230,233,0.6);"></div>
<div class="b" style="left:984px;top:1061px;width:2px;height:57px;background:#e7e9ec;"></div>
<div class="b" style="left:1127px;top:1061px;width:2px;height:57px;background:#e7e9ec;"></div>
<div class="b" style="left:1270px;top:1061px;width:2px;height:57px;background:rgba(226,230,233,0.6);"></div>
<div class="b" style="left:1414px;top:1061px;width:2px;height:57px;background:#e7e9ec;"></div>
<div class="b" style="left:1557px;top:1061px;width:2px;height:57px;background:#e7e9ec;"></div>
<div class="b" style="left:1700px;top:1061px;width:2px;height:57px;background:#e7e9ec;"></div>
<div class="b" style="left:1843px;top:1061px;width:2px;height:57px;background:#e7e9ec;"></div>
<div class="b" style="left:1986px;top:1061px;width:2px;height:57px;background:#e7e9ec;"></div>
<div class="b" style="left:555px;top:1120px;width:2px;height:57px;background:#e7e9ec;"></div>
<div class="b" style="left:698px;top:1120px;width:2px;height:57px;background:rgba(226,230,233,0.6);"></div>
<div class="b" style="left:841px;top:1120px;width:2px;height:57px;background:rgba(226,230,233,0.6);"></div>
<div class="b" style="left:984px;top:1120px;width:2px;height:57px;background:#e7e9ec;"></div>
<div class="b" style="left:1127px;top:1120px;width:2px;height:57px;background:#e7e9ec;"></div>
<div class="b" style="left:1270px;top:1120px;width:2px;height:57px;background:#e7e9ec;"></div>
<div class="b" style="left:1414px;top:1120px;width:2px;height:57px;background:#e7e9ec;"></div>
<div class="b" style="left:1557px;top:1120px;width:2px;height:57px;background:#e7e9ec;"></div>
<div class="b" style="left:1700px;top:1120px;width:2px;height:57px;background:#e7e9ec;"></div>
<div class="b" style="left:1843px;top:1120px;width:2px;height:57px;background:#e7e9ec;"></div>
<div class="b" style="left:1986px;top:1120px;width:2px;height:57px;background:#e7e9ec;"></div>
<div class="b" style="left:555px;top:1179px;width:2px;height:57px;background:#e7e9ec;"></div>
<div class="b" style="left:698px;top:1179px;width:2px;height:57px;background:rgba(226,230,233,0.6);"></div>
<div class="b" style="left:841px;top:1179px;width:2px;height:57px;background:rgba(226,230,233,0.6);"></div>
<div class="b" style="left:984px;top:1179px;width:2px;height:57px;background:#e7e9ec;"></div>
<div class="b" style="left:1127px;top:1179px;width:2px;height:57px;background:#e7e9ec;"></div>
<div class="b" style="left:1270px;top:1179px;width:2px;height:57px;background:#e7e9ec;"></div>
<div class="b" style="left:1414px;top:1179px;width:2px;height:57px;background:#e7e9ec;"></div>
<div class="b" style="left:1557px;top:1179px;width:2px;height:57px;background:#e7e9ec;"></div>
<div class="b" style="left:1700px;top:1179px;width:2px;height:57px;background:#e7e9ec;"></div>
<div class="b" style="left:1843px;top:1179px;width:2px;height:57px;background:#e7e9ec;"></div>
<div class="b" style="left:1986px;top:1179px;width:2px;height:57px;background:#e7e9ec;"></div>
<div class="b" style="left:555px;top:1238px;width:2px;height:58px;background:#e7e9ec;"></div>
<div class="b" style="left:698px;top:1238px;width:2px;height:58px;background:rgba(226,230,233,0.6);"></div>
<div class="b" style="left:841px;top:1238px;width:2px;height:58px;background:rgba(226,230,233,0.6);"></div>
<div class="b" style="left:984px;top:1238px;width:2px;height:58px;background:#e7e9ec;"></div>
<div class="b" style="left:1127px;top:1238px;width:2px;height:58px;background:#e7e9ec;"></div>
<div class="b" style="left:1270px;top:1238px;width:2px;height:58px;background:rgba(226,230,233,0.6);"></div>
<div class="b" style="left:1414px;top:1238px;width:2px;height:58px;background:rgba(226,230,233,0.6);"></div>
<div class="b" style="left:1557px;top:1238px;width:2px;height:58px;background:rgba(226,230,233,0.6);"></div>
<div class="b" style="left:1700px;top:1238px;width:2px;height:58px;background:#e7e9ec;"></div>
<div class="b" style="left:1843px;top:1238px;width:2px;height:58px;background:#e7e9ec;"></div>
<div class="b" style="left:1986px;top:1238px;width:2px;height:58px;background:#e7e9ec;"></div>
<div class="t" id="doctype" style="left:24.48px;top:248.76px;line-height:42px;font-size:21.16px;color:#ffffff;letter-spacing:1.277px;-webkit-text-stroke:0.35px #ffffff;">Document Type</div>
<div class="t" id="myteam" style="left:905.00px;top:193.06px;line-height:42px;font-size:21.16px;color:#0f172a;font-weight:700;letter-spacing:0.939px;">My Team</div>
<div class="t" id="ours" style="left:1007.67px;top:198.53px;line-height:34px;font-size:16.93px;color:#0d9488;letter-spacing:1.746px;-webkit-text-stroke:0.35px #0d9488;">(Ours)</div>
<div class="t" id="sellers" style="left:1665.20px;top:193.06px;line-height:42px;font-size:21.16px;color:#0f172a;font-weight:700;letter-spacing:0.626px;">Sellers</div>
<div class="t" id="myfirm" style="left:800.07px;top:241.56px;line-height:42px;font-size:21.16px;color:#2563eb;letter-spacing:1.232px;-webkit-text-stroke:0.35px #2563eb;">My Firm</div>
<div class="t" id="myclient" style="left:1222.47px;top:241.56px;line-height:42px;font-size:21.16px;color:#16a34a;letter-spacing:1.118px;-webkit-text-stroke:0.35px #16a34a;">My Client</div>
<div class="t" id="counsel" style="left:1487.07px;top:241.56px;line-height:42px;font-size:21.16px;color:#d97706;letter-spacing:1.010px;-webkit-text-stroke:0.35px #d97706;">Their Counsel</div>
<div class="t" id="company" style="left:1767.07px;top:241.56px;line-height:42px;font-size:21.16px;color:#d97706;letter-spacing:0.923px;-webkit-text-stroke:0.35px #d97706;">Their Company</div>
<div class="t" id="fn0" style="left:603.44px;top:285.96px;line-height:42px;font-size:21.16px;color:#171717;letter-spacing:0.626px;">Alice</div>
<div class="t" id="ln0" style="left:594.34px;top:315.42px;line-height:32px;font-size:16.09px;color:#787878;letter-spacing:0.936px;">Johnson</div>
<div class="t" id="fn1" style="left:749.72px;top:285.96px;line-height:42px;font-size:21.16px;color:#171717;letter-spacing:1.409px;">Bob</div>
<div class="t" id="ln1" style="left:747.77px;top:315.42px;line-height:32px;font-size:16.09px;color:#787878;letter-spacing:1.080px;">Smith</div>
<div class="t" id="fn2" style="left:886.50px;top:285.96px;line-height:42px;font-size:21.16px;color:#171717;letter-spacing:0.984px;">Carol</div>
<div class="t" id="ln2" style="left:881.50px;top:315.42px;line-height:32px;font-size:16.09px;color:#787878;letter-spacing:0.680px;">Williams</div>
<div class="t" id="fn3" style="left:1032.43px;top:285.96px;line-height:42px;font-size:21.16px;color:#171717;letter-spacing:1.261px;">John</div>
<div class="t" id="ln3" style="left:1040.48px;top:315.42px;line-height:32px;font-size:16.09px;color:#787878;letter-spacing:1.166px;">Doe</div>
<div class="t" id="fn4" style="left:1159.56px;top:285.96px;line-height:42px;font-size:21.16px;color:#171717;letter-spacing:0.370px;">Amanda</div>
<div class="t" id="ln4" style="left:1174.36px;top:315.42px;line-height:32px;font-size:16.09px;color:#787878;letter-spacing:0.892px;">Foster</div>
<div class="t" id="fn5" style="left:1313.64px;top:285.96px;line-height:42px;font-size:21.16px;color:#171717;letter-spacing:1.092px;">David</div>
<div class="t" id="ln5" style="left:1320.64px;top:315.42px;line-height:32px;font-size:16.09px;color:#787878;letter-spacing:1.085px;">Miller</div>
<div class="t" id="fn6" style="left:1451.42px;top:285.96px;line-height:42px;font-size:21.16px;color:#171717;letter-spacing:0.913px;">Robert</div>
<div class="t" id="ln6" style="left:1470.87px;top:315.42px;line-height:32px;font-size:16.09px;color:#787878;letter-spacing:1.396px;">Kim</div>
<div class="t" id="fn7" style="left:1588.85px;top:285.96px;line-height:42px;font-size:21.16px;color:#171717;letter-spacing:0.852px;">Jennifer</div>
<div class="t" id="ln7" style="left:1606.45px;top:315.42px;line-height:32px;font-size:16.09px;color:#787878;letter-spacing:0.710px;">Walsh</div>
<div class="t" id="fn8" style="left:1751.68px;top:285.96px;line-height:42px;font-size:21.16px;color:#171717;letter-spacing:0.450px;">Lisa</div>
<div class="t" id="ln8" style="left:1754.43px;top:315.42px;line-height:32px;font-size:16.09px;color:#787878;letter-spacing:0.654px;">Park</div>
<div class="t" id="fn9" style="left:1876.06px;top:285.96px;line-height:42px;font-size:21.16px;color:#171717;letter-spacing:0.668px;">Thomas</div>
<div class="t" id="ln9" style="left:1879.06px;top:315.42px;line-height:32px;font-size:16.09px;color:#787878;letter-spacing:0.796px;">Anderson</div>
<div class="t" id="tri0" style="left:25.40px;top:356.06px;line-height:46px;font-size:23.20px;color:#0a0a0a;">▼</div>
<div class="t" id="sec0" style="left:59.70px;top:359.76px;line-height:42px;font-size:21.16px;color:#0a0a0a;font-weight:700;letter-spacing:0.586px;">Core Deal</div>
<div class="t" id="cnt0" style="left:177.40px;top:363.87px;line-height:36px;font-size:17.97px;color:#858585;letter-spacing:0.934px;">(6 documents)</div>
<div class="t" id="doc1" style="left:52.87px;top:418.90px;line-height:42px;font-size:21.16px;color:#334155;letter-spacing:1.030px;-webkit-text-stroke:0.35px #334155;">NDA / Confidentiality Agreement</div>
<div class="t" id="c1_0" style="left:612.99px;top:419.20px;line-height:42px;font-size:21.16px;color:#047857;font-weight:700;letter-spacing:0.456px;">TO</div>
<div class="t" id="c1_1" style="left:756.17px;top:419.20px;line-height:42px;font-size:21.16px;color:#047857;font-weight:700;letter-spacing:0.456px;">TO</div>
<div class="t" id="c1_4" style="left:1185.71px;top:419.20px;line-height:42px;font-size:21.16px;color:#047857;font-weight:700;letter-spacing:0.456px;">TO</div>
<div class="t" id="c1_5" style="left:1319.89px;top:419.20px;line-height:42px;font-size:21.16px;color:#b45309;font-weight:700;letter-spacing:0.018px;">BCC</div>
<div class="t" id="c1_6" style="left:1472.07px;top:419.20px;line-height:42px;font-size:21.16px;color:#047857;font-weight:700;letter-spacing:0.456px;">TO</div>
<div class="t" id="c1_7" style="left:1615.25px;top:419.20px;line-height:42px;font-size:21.16px;color:#047857;font-weight:700;letter-spacing:0.456px;">TO</div>
<div class="t" id="c1_8" style="left:1758.43px;top:419.20px;line-height:42px;font-size:21.16px;color:#047857;font-weight:700;letter-spacing:0.456px;">TO</div>
<div class="t" id="c1_9" style="left:1901.61px;top:419.20px;line-height:42px;font-size:21.16px;color:#047857;font-weight:700;letter-spacing:0.456px;">TO</div>
<div class="t" id="doc2" style="left:54.17px;top:478.04px;line-height:42px;font-size:21.16px;color:#334155;letter-spacing:0.959px;-webkit-text-stroke:0.35px #334155;">Term Sheet</div>
<div class="t" id="c2_0" style="left:611.54px;top:478.34px;line-height:42px;font-size:21.16px;color:#1d4ed8;font-weight:700;letter-spacing:0.818px;">CC</div>
<div class="t" id="c2_1" style="left:756.17px;top:478.34px;line-height:42px;font-size:21.16px;color:#047857;font-weight:700;letter-spacing:0.456px;">TO</div>
<div class="t" id="c2_2" style="left:890.35px;top:478.34px;line-height:42px;font-size:21.16px;color:#b45309;font-weight:700;letter-spacing:0.018px;">BCC</div>
<div class="t" id="c2_4" style="left:1185.71px;top:478.34px;line-height:42px;font-size:21.16px;color:#047857;font-weight:700;letter-spacing:0.456px;">TO</div>
<div class="t" id="c2_5" style="left:1328.89px;top:478.34px;line-height:42px;font-size:21.16px;color:#047857;font-weight:700;letter-spacing:0.456px;">TO</div>
<div class="t" id="c2_6" style="left:1472.07px;top:478.34px;line-height:42px;font-size:21.16px;color:#047857;font-weight:700;letter-spacing:0.456px;">TO</div>
<div class="t" id="c2_7" style="left:1615.25px;top:478.34px;line-height:42px;font-size:21.16px;color:#047857;font-weight:700;letter-spacing:0.456px;">TO</div>
<div class="t" id="c2_8" style="left:1758.43px;top:478.34px;line-height:42px;font-size:21.16px;color:#047857;font-weight:700;letter-spacing:0.456px;">TO</div>
<div class="t" id="c2_9" style="left:1901.61px;top:478.34px;line-height:42px;font-size:21.16px;color:#047857;font-weight:700;letter-spacing:0.456px;">TO</div>
<div class="t" id="doc3" style="left:53.67px;top:537.18px;line-height:42px;font-size:21.16px;color:#334155;letter-spacing:0.930px;-webkit-text-stroke:0.35px #334155;">Stock Purchase Agreement (SPA)</div>
<div class="t" id="c3_0" style="left:612.99px;top:537.48px;line-height:42px;font-size:21.16px;color:#047857;font-weight:700;letter-spacing:0.456px;">TO</div>
<div class="t" id="c3_1" style="left:756.17px;top:537.48px;line-height:42px;font-size:21.16px;color:#047857;font-weight:700;letter-spacing:0.456px;">TO</div>
<div class="t" id="c3_2" style="left:899.35px;top:537.48px;line-height:42px;font-size:21.16px;color:#047857;font-weight:700;letter-spacing:0.456px;">TO</div>
<div class="t" id="c3_4" style="left:1185.71px;top:537.48px;line-height:42px;font-size:21.16px;color:#047857;font-weight:700;letter-spacing:0.456px;">TO</div>
<div class="t" id="c3_5" style="left:1328.89px;top:537.48px;line-height:42px;font-size:21.16px;color:#047857;font-weight:700;letter-spacing:0.456px;">TO</div>
<div class="t" id="c3_6" style="left:1472.07px;top:537.48px;line-height:42px;font-size:21.16px;color:#047857;font-weight:700;letter-spacing:0.456px;">TO</div>
<div class="t" id="c3_7" style="left:1615.25px;top:537.48px;line-height:42px;font-size:21.16px;color:#047857;font-weight:700;letter-spacing:0.456px;">TO</div>
<div class="t" id="c3_8" style="left:1758.43px;top:537.48px;line-height:42px;font-size:21.16px;color:#047857;font-weight:700;letter-spacing:0.456px;">TO</div>
<div class="t" id="c3_9" style="left:1901.61px;top:537.48px;line-height:42px;font-size:21.16px;color:#047857;font-weight:700;letter-spacing:0.456px;">TO</div>
<div class="t" id="doc4" style="left:52.87px;top:596.32px;line-height:42px;font-size:21.16px;color:#334155;letter-spacing:1.034px;-webkit-text-stroke:0.35px #334155;">Disclosure Schedules</div>
<div class="t" id="c4_0" style="left:612.99px;top:596.62px;line-height:42px;font-size:21.16px;color:#047857;font-weight:700;letter-spacing:0.456px;">TO</div>
<div class="t" id="c4_1" style="left:756.17px;top:596.62px;line-height:42px;font-size:21.16px;color:#047857;font-weight:700;letter-spacing:0.456px;">TO</div>
<div class="t" id="c4_2" style="left:899.35px;top:596.62px;line-height:42px;font-size:21.16px;color:#047857;font-weight:700;letter-spacing:0.456px;">TO</div>
<div class="t" id="c4_4" style="left:1184.26px;top:596.62px;line-height:42px;font-size:21.16px;color:#1d4ed8;font-weight:700;letter-spacing:0.818px;">CC</div>
<div class="t" id="c4_5" style="left:1327.44px;top:596.62px;line-height:42px;font-size:21.16px;color:#1d4ed8;font-weight:700;letter-spacing:0.818px;">CC</div>
<div class="t" id="c4_6" style="left:1472.07px;top:596.62px;line-height:42px;font-size:21.16px;color:#047857;font-weight:700;letter-spacing:0.456px;">TO</div>
<div class="t" id="c4_7" style="left:1615.25px;top:596.62px;line-height:42px;font-size:21.16px;color:#047857;font-weight:700;letter-spacing:0.456px;">TO</div>
<div class="t" id="c4_8" style="left:1758.43px;top:596.62px;line-height:42px;font-size:21.16px;color:#047857;font-weight:700;letter-spacing:0.456px;">TO</div>
<div class="t" id="c4_9" style="left:1900.16px;top:596.62px;line-height:42px;font-size:21.16px;color:#1d4ed8;font-weight:700;letter-spacing:0.818px;">CC</div>
<div class="t" id="doc5" style="left:53.57px;top:655.46px;line-height:42px;font-size:21.16px;color:#334155;letter-spacing:1.150px;-webkit-text-stroke:0.35px #334155;">Closing Certificates</div>
<div class="t" id="c5_0" style="left:612.99px;top:655.76px;line-height:42px;font-size:21.16px;color:#047857;font-weight:700;letter-spacing:0.456px;">TO</div>
<div class="t" id="c5_1" style="left:756.17px;top:655.76px;line-height:42px;font-size:21.16px;color:#047857;font-weight:700;letter-spacing:0.456px;">TO</div>
<div class="t" id="c5_2" style="left:899.35px;top:655.76px;line-height:42px;font-size:21.16px;color:#047857;font-weight:700;letter-spacing:0.456px;">TO</div>
<div class="t" id="c5_4" style="left:1185.71px;top:655.76px;line-height:42px;font-size:21.16px;color:#047857;font-weight:700;letter-spacing:0.456px;">TO</div>
<div class="t" id="c5_5" style="left:1328.89px;top:655.76px;line-height:42px;font-size:21.16px;color:#047857;font-weight:700;letter-spacing:0.456px;">TO</div>
<div class="t" id="c5_6" style="left:1472.07px;top:655.76px;line-height:42px;font-size:21.16px;color:#047857;font-weight:700;letter-spacing:0.456px;">TO</div>
<div class="t" id="c5_7" style="left:1615.25px;top:655.76px;line-height:42px;font-size:21.16px;color:#047857;font-weight:700;letter-spacing:0.456px;">TO</div>
<div class="t" id="c5_8" style="left:1758.43px;top:655.76px;line-height:42px;font-size:21.16px;color:#047857;font-weight:700;letter-spacing:0.456px;">TO</div>
<div class="t" id="c5_9" style="left:1901.61px;top:655.76px;line-height:42px;font-size:21.16px;color:#047857;font-weight:700;letter-spacing:0.456px;">TO</div>
<div class="t" id="doc6" style="left:53.67px;top:714.60px;line-height:42px;font-size:21.16px;color:#334155;letter-spacing:0.950px;-webkit-text-stroke:0.35px #334155;">Shareholders Agreement (SHA)</div>
<div class="t" id="c6_0" style="left:612.99px;top:714.90px;line-height:42px;font-size:21.16px;color:#047857;font-weight:700;letter-spacing:0.456px;">TO</div>
<div class="t" id="c6_1" style="left:756.17px;top:714.90px;line-height:42px;font-size:21.16px;color:#047857;font-weight:700;letter-spacing:0.456px;">TO</div>
<div class="t" id="c6_2" style="left:899.35px;top:714.90px;line-height:42px;font-size:21.16px;color:#047857;font-weight:700;letter-spacing:0.456px;">TO</div>
<div class="t" id="c6_4" style="left:1185.71px;top:714.90px;line-height:42px;font-size:21.16px;color:#047857;font-weight:700;letter-spacing:0.456px;">TO</div>
<div class="t" id="c6_5" style="left:1328.89px;top:714.90px;line-height:42px;font-size:21.16px;color:#047857;font-weight:700;letter-spacing:0.456px;">TO</div>
<div class="t" id="c6_6" style="left:1472.07px;top:714.90px;line-height:42px;font-size:21.16px;color:#047857;font-weight:700;letter-spacing:0.456px;">TO</div>
<div class="t" id="c6_7" style="left:1615.25px;top:714.90px;line-height:42px;font-size:21.16px;color:#047857;font-weight:700;letter-spacing:0.456px;">TO</div>
<div class="t" id="c6_8" style="left:1758.43px;top:714.90px;line-height:42px;font-size:21.16px;color:#047857;font-weight:700;letter-spacing:0.456px;">TO</div>
<div class="t" id="c6_9" style="left:1901.61px;top:714.90px;line-height:42px;font-size:21.16px;color:#047857;font-weight:700;letter-spacing:0.456px;">TO</div>
<div class="t" id="tri7" style="left:25.40px;top:770.04px;line-height:46px;font-size:23.20px;color:#0a0a0a;">▼</div>
<div class="t" id="sec7" style="left:59.10px;top:773.74px;line-height:42px;font-size:21.16px;color:#0a0a0a;font-weight:700;letter-spacing:0.450px;">Financing</div>
<div class="t" id="cnt7" style="left:177.00px;top:777.85px;line-height:36px;font-size:17.97px;color:#858585;letter-spacing:0.917px;">(3 documents)</div>
<div class="t" id="doc8" style="left:52.67px;top:832.88px;line-height:42px;font-size:21.16px;color:#334155;letter-spacing:0.975px;-webkit-text-stroke:0.35px #334155;">Investors' Rights Agreement (IRA)</div>
<div class="t" id="c8_0" style="left:612.99px;top:833.18px;line-height:42px;font-size:21.16px;color:#047857;font-weight:700;letter-spacing:0.456px;">TO</div>
<div class="t" id="c8_1" style="left:756.17px;top:833.18px;line-height:42px;font-size:21.16px;color:#047857;font-weight:700;letter-spacing:0.456px;">TO</div>
<div class="t" id="c8_2" style="left:899.35px;top:833.18px;line-height:42px;font-size:21.16px;color:#047857;font-weight:700;letter-spacing:0.456px;">TO</div>
<div class="t" id="c8_4" style="left:1185.71px;top:833.18px;line-height:42px;font-size:21.16px;color:#047857;font-weight:700;letter-spacing:0.456px;">TO</div>
<div class="t" id="c8_5" style="left:1328.89px;top:833.18px;line-height:42px;font-size:21.16px;color:#047857;font-weight:700;letter-spacing:0.456px;">TO</div>
<div class="t" id="c8_6" style="left:1472.07px;top:833.18px;line-height:42px;font-size:21.16px;color:#047857;font-weight:700;letter-spacing:0.456px;">TO</div>
<div class="t" id="c8_7" style="left:1615.25px;top:833.18px;line-height:42px;font-size:21.16px;color:#047857;font-weight:700;letter-spacing:0.456px;">TO</div>
<div class="t" id="c8_8" style="left:1758.43px;top:833.18px;line-height:42px;font-size:21.16px;color:#047857;font-weight:700;letter-spacing:0.456px;">TO</div>
<div class="t" id="c8_9" style="left:1901.61px;top:833.18px;line-height:42px;font-size:21.16px;color:#047857;font-weight:700;letter-spacing:0.456px;">TO</div>
<div class="t" id="doc9" style="left:52.87px;top:892.02px;line-height:42px;font-size:21.16px;color:#334155;letter-spacing:0.943px;-webkit-text-stroke:0.35px #334155;">Legal Opinions</div>
<div class="t" id="c9_0" style="left:612.99px;top:892.32px;line-height:42px;font-size:21.16px;color:#047857;font-weight:700;letter-spacing:0.456px;">TO</div>
<div class="t" id="c9_1" style="left:756.17px;top:892.32px;line-height:42px;font-size:21.16px;color:#047857;font-weight:700;letter-spacing:0.456px;">TO</div>
<div class="t" id="c9_2" style="left:899.35px;top:892.32px;line-height:42px;font-size:21.16px;color:#047857;font-weight:700;letter-spacing:0.456px;">TO</div>
<div class="t" id="c9_4" style="left:1184.26px;top:892.32px;line-height:42px;font-size:21.16px;color:#1d4ed8;font-weight:700;letter-spacing:0.818px;">CC</div>
<div class="t" id="c9_5" style="left:1327.44px;top:892.32px;line-height:42px;font-size:21.16px;color:#1d4ed8;font-weight:700;letter-spacing:0.818px;">CC</div>
<div class="t" id="c9_6" style="left:1472.07px;top:892.32px;line-height:42px;font-size:21.16px;color:#047857;font-weight:700;letter-spacing:0.456px;">TO</div>
<div class="t" id="c9_7" style="left:1615.25px;top:892.32px;line-height:42px;font-size:21.16px;color:#047857;font-weight:700;letter-spacing:0.456px;">TO</div>
<div class="t" id="c9_8" style="left:1756.98px;top:892.32px;line-height:42px;font-size:21.16px;color:#1d4ed8;font-weight:700;letter-spacing:0.818px;">CC</div>
<div class="t" id="c9_9" style="left:1900.16px;top:892.32px;line-height:42px;font-size:21.16px;color:#1d4ed8;font-weight:700;letter-spacing:0.818px;">CC</div>
<div class="t" id="doc10" style="left:53.67px;top:951.16px;line-height:42px;font-size:21.16px;color:#334155;letter-spacing:1.028px;-webkit-text-stroke:0.35px #334155;">Side Letters</div>
<div class="t" id="c10_0" style="left:612.99px;top:951.46px;line-height:42px;font-size:21.16px;color:#047857;font-weight:700;letter-spacing:0.456px;">TO</div>
<div class="t" id="c10_1" style="left:756.17px;top:951.46px;line-height:42px;font-size:21.16px;color:#047857;font-weight:700;letter-spacing:0.456px;">TO</div>
<div class="t" id="c10_2" style="left:899.35px;top:951.46px;line-height:42px;font-size:21.16px;color:#047857;font-weight:700;letter-spacing:0.456px;">TO</div>
<div class="t" id="c10_4" style="left:1185.71px;top:951.46px;line-height:42px;font-size:21.16px;color:#047857;font-weight:700;letter-spacing:0.456px;">TO</div>
<div class="t" id="c10_5" style="left:1328.89px;top:951.46px;line-height:42px;font-size:21.16px;color:#047857;font-weight:700;letter-spacing:0.456px;">TO</div>
<div class="t" id="c10_6" style="left:1472.07px;top:951.46px;line-height:42px;font-size:21.16px;color:#047857;font-weight:700;letter-spacing:0.456px;">TO</div>
<div class="t" id="c10_7" style="left:1615.25px;top:951.46px;line-height:42px;font-size:21.16px;color:#047857;font-weight:700;letter-spacing:0.456px;">TO</div>
<div class="t" id="c10_8" style="left:1756.98px;top:951.46px;line-height:42px;font-size:21.16px;color:#1d4ed8;font-weight:700;letter-spacing:0.818px;">CC</div>
<div class="t" id="c10_9" style="left:1900.16px;top:951.46px;line-height:42px;font-size:21.16px;color:#1d4ed8;font-weight:700;letter-spacing:0.818px;">CC</div>
<div class="t" id="tri11" style="left:25.40px;top:1006.60px;line-height:46px;font-size:23.20px;color:#0a0a0a;">▼</div>
<div class="t" id="sec11" style="left:59.40px;top:1010.30px;line-height:42px;font-size:21.16px;color:#0a0a0a;font-weight:700;letter-spacing:0.462px;">Employment</div>
<div class="t" id="cnt11" style="left:206.20px;top:1014.41px;line-height:36px;font-size:17.97px;color:#858585;letter-spacing:0.917px;">(4 documents)</div>
<div class="t" id="doc12" style="left:52.87px;top:1069.44px;line-height:42px;font-size:21.16px;color:#334155;letter-spacing:1.108px;-webkit-text-stroke:0.35px #334155;">Employment Agreements</div>
<div class="t" id="c12_0" style="left:612.99px;top:1069.74px;line-height:42px;font-size:21.16px;color:#047857;font-weight:700;letter-spacing:0.456px;">TO</div>
<div class="t" id="c12_1" style="left:756.17px;top:1069.74px;line-height:42px;font-size:21.16px;color:#047857;font-weight:700;letter-spacing:0.456px;">TO</div>
<div class="t" id="c12_2" style="left:899.35px;top:1069.74px;line-height:42px;font-size:21.16px;color:#047857;font-weight:700;letter-spacing:0.456px;">TO</div>
<div class="t" id="c12_4" style="left:1184.26px;top:1069.74px;line-height:42px;font-size:21.16px;color:#1d4ed8;font-weight:700;letter-spacing:0.818px;">CC</div>
<div class="t" id="c12_5" style="left:1327.44px;top:1069.74px;line-height:42px;font-size:21.16px;color:#1d4ed8;font-weight:700;letter-spacing:0.818px;">CC</div>
<div class="t" id="doc13" style="left:53.57px;top:1128.58px;line-height:42px;font-size:21.16px;color:#334155;letter-spacing:1.276px;-webkit-text-stroke:0.35px #334155;">Offer Letters</div>
<div class="t" id="c13_0" style="left:612.99px;top:1128.88px;line-height:42px;font-size:21.16px;color:#047857;font-weight:700;letter-spacing:0.456px;">TO</div>
<div class="t" id="c13_1" style="left:756.17px;top:1128.88px;line-height:42px;font-size:21.16px;color:#047857;font-weight:700;letter-spacing:0.456px;">TO</div>
<div class="t" id="c13_2" style="left:897.90px;top:1128.88px;line-height:42px;font-size:21.16px;color:#1d4ed8;font-weight:700;letter-spacing:0.818px;">CC</div>
<div class="t" id="c13_5" style="left:1327.44px;top:1128.88px;line-height:42px;font-size:21.16px;color:#1d4ed8;font-weight:700;letter-spacing:0.818px;">CC</div>
<div class="t" id="doc14" style="left:53.67px;top:1187.72px;line-height:42px;font-size:21.16px;color:#334155;letter-spacing:1.056px;-webkit-text-stroke:0.35px #334155;">Stock Option Grants</div>
<div class="t" id="c14_0" style="left:612.99px;top:1188.02px;line-height:42px;font-size:21.16px;color:#047857;font-weight:700;letter-spacing:0.456px;">TO</div>
<div class="t" id="c14_1" style="left:756.17px;top:1188.02px;line-height:42px;font-size:21.16px;color:#047857;font-weight:700;letter-spacing:0.456px;">TO</div>
<div class="t" id="c14_2" style="left:899.35px;top:1188.02px;line-height:42px;font-size:21.16px;color:#047857;font-weight:700;letter-spacing:0.456px;">TO</div>
<div class="t" id="c14_5" style="left:1319.89px;top:1188.02px;line-height:42px;font-size:21.16px;color:#b45309;font-weight:700;letter-spacing:0.018px;">BCC</div>
<div class="t" id="doc15" style="left:53.57px;top:1246.86px;line-height:42px;font-size:21.16px;color:#334155;letter-spacing:1.094px;-webkit-text-stroke:0.35px #334155;">Consulting Agreements</div>
<div class="t" id="c15_0" style="left:611.54px;top:1247.16px;line-height:42px;font-size:21.16px;color:#1d4ed8;font-weight:700;letter-spacing:0.818px;">CC</div>
<div class="t" id="c15_1" style="left:754.72px;top:1247.16px;line-height:42px;font-size:21.16px;color:#1d4ed8;font-weight:700;letter-spacing:0.818px;">CC</div>
<div class="t" id="c15_2" style="left:897.90px;top:1247.16px;line-height:42px;font-size:21.16px;color:#1d4ed8;font-weight:700;letter-spacing:0.818px;">CC</div>
<div class="t" id="c15_4" style="left:1185.71px;top:1247.16px;line-height:42px;font-size:21.16px;color:#047857;font-weight:700;letter-spacing:0.456px;">TO</div>
<div class="t" id="c15_5" style="left:1328.89px;top:1247.16px;line-height:42px;font-size:21.16px;color:#047857;font-weight:700;letter-spacing:0.456px;">TO</div>
<div class="t" id="c15_6" style="left:1472.07px;top:1247.16px;line-height:42px;font-size:21.16px;color:#047857;font-weight:700;letter-spacing:0.456px;">TO</div>
<div class="t" id="c15_7" style="left:1615.25px;top:1247.16px;line-height:42px;font-size:21.16px;color:#047857;font-weight:700;letter-spacing:0.456px;">TO</div>
</div></div>
<div class="b" style="left:6px;top:186px;width:1983px;height:1097px;border-radius:14px;box-sizing:border-box;border:2px solid #e5e8ec;border-left-width:1px;"></div>
<div class="b" style="left:7px;top:349px;width:7px;height:61px;background:#3b82f6;"></div>
<div class="b" style="left:7px;top:763px;width:7px;height:61px;background:#22c55e;"></div>
<div class="b" style="left:7px;top:1000px;width:7px;height:61px;background:#f89d08;"></div>
</body></html>
